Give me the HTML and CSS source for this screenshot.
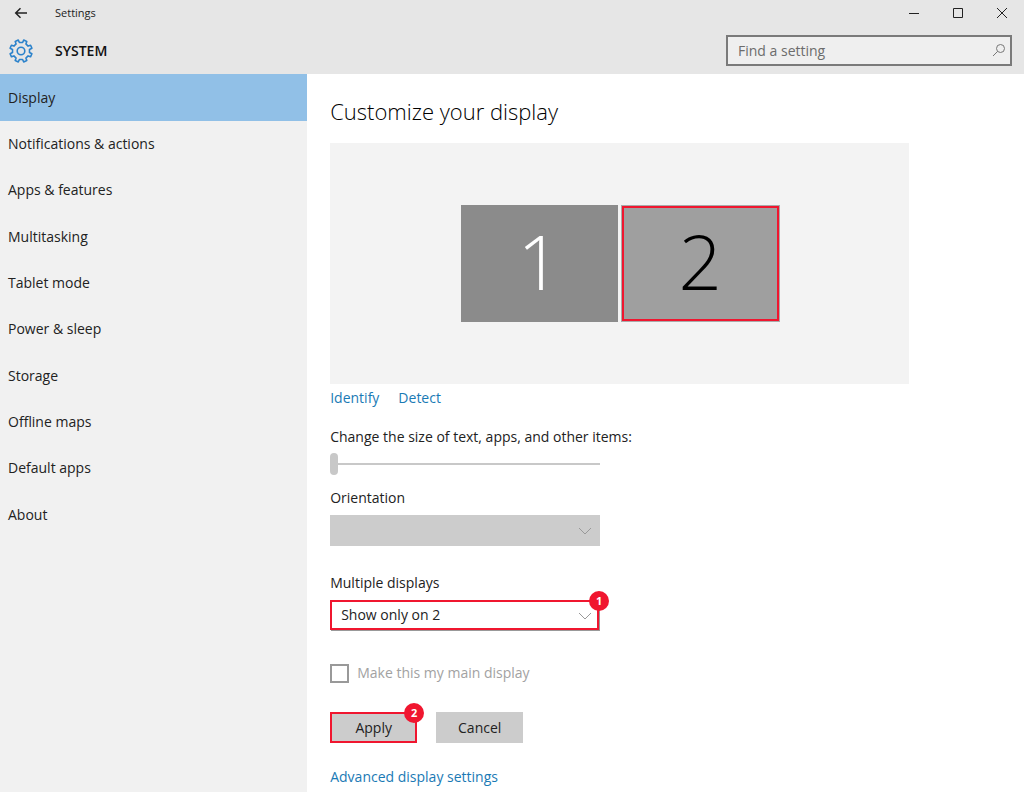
FILE: index.html
```html
<!DOCTYPE html>
<html lang="en">
<head>
    <meta charset="UTF-8">
    <meta name="viewport" content="width=device-width, initial-scale=1.0">
    <title>Settings</title>
    <link rel="stylesheet" href="styles.css">
</head>
<body>
    <header>
        <div class="titlebar">
            <button class="back" type="button" aria-label="Back">
                <svg width="14" height="12" viewBox="0 0 14 12"><path d="M13 6H2M6.500 1.200L1.700 6l4.800 4.800"/></svg>
            </button>
            <span class="app-name">Settings</span>
            <div class="window-buttons">
                <button type="button" aria-label="Minimize">
                    <svg width="12" height="12" viewBox="0 0 12 12"><path d="M1 6.500h10"/></svg>
                </button>
                <button type="button" aria-label="Maximize">
                    <svg width="12" height="12" viewBox="0 0 12 12"><path d="M1.500 1.500h9v9h-9z"/></svg>
                </button>
                <button type="button" aria-label="Close">
                    <svg width="12" height="12" viewBox="0 0 12 12"><path d="M1 1l10 10M11 1L1 11"/></svg>
                </button>
            </div>
        </div>
        <div class="page-bar">
            <svg class="gear" width="24" height="24" viewBox="0 0 24 24">
                <path d="M13.600 3.500L14.700 1.100 17.800 2.400 16.900 4.900 19.100 7.100 21.600 6.200 22.900 9.300 20.500 10.400V13.600L22.900 14.700 21.600 17.800 19.100 16.900 16.900 19.100 17.800 21.600 14.700 22.900 13.600 20.500H10.400L9.300 22.900 6.200 21.600 7.100 19.100 4.900 16.900 2.400 17.800 1.100 14.700 3.500 13.600V10.400L1.100 9.300 2.400 6.200 4.900 7.100 7.100 4.900 6.200 2.400 9.300 1.100 10.400 3.500z"/>
                <circle cx="12" cy="12" r="3.800"/>
            </svg>
            <h1>SYSTEM</h1>
            <form class="search">
                <input type="text" placeholder="Find a setting" aria-label="Find a setting">
                <svg width="14" height="14" viewBox="0 0 14 14"><circle cx="8.500" cy="5.500" r="4"/><path d="M5.600 8.400L1 13"/></svg>
            </form>
        </div>
    </header>

    <div class="content">
        <nav>
            <a class="active" href="#display">Display</a>
            <a href="#notifications">Notifications &amp; actions</a>
            <a href="#apps">Apps &amp; features</a>
            <a href="#multitasking">Multitasking</a>
            <a href="#tablet">Tablet mode</a>
            <a href="#power">Power &amp; sleep</a>
            <a href="#storage">Storage</a>
            <a href="#maps">Offline maps</a>
            <a href="#default">Default apps</a>
            <a href="#about">About</a>
        </nav>

        <main>
            <h2>Customize your display</h2>
            <div class="preview">
                <button class="screen" type="button">1</button>
                <button class="screen selected" type="button">2</button>
            </div>
            <div class="links">
                <a href="#identify">Identify</a>
                <a href="#detect">Detect</a>
            </div>

            <div class="field">
                <label for="size">Change the size of text, apps, and other items:</label>
                <input id="size" type="range" min="0" max="100" value="0" disabled>
            </div>

            <div class="field orientation">
                <label for="orientation">Orientation</label>
                <div class="dropdown">
                    <select id="orientation" disabled><option></option></select>
                    <svg class="chevron" width="14" height="8" viewBox="0 0 14 8"><path d="M1 1l6 6 6-6"/></svg>
                </div>
            </div>

            <div class="field displays">
                <label for="displays">Multiple displays</label>
                <div class="dropdown">
                    <select id="displays" class="marked"><option>Show only on 2</option></select>
                    <svg class="chevron" width="14" height="8" viewBox="0 0 14 8"><path d="M1 1l6 6 6-6"/></svg>
                    <span class="badge">1</span>
                </div>
            </div>

            <div class="check">
                <input id="main-display" type="checkbox" disabled>
                <label for="main-display">Make this my main display</label>
            </div>

            <div class="actions">
                <div class="action">
                    <button class="marked" type="button">Apply</button>
                    <span class="badge">2</span>
                </div>
                <button type="button">Cancel</button>
            </div>

            <a class="advanced" href="#advanced">Advanced display settings</a>
        </main>
    </div>
</body>
</html>
```
FILE: styles.css
```css
* {
    box-sizing: border-box;
}

body {
    margin: 0;
    min-height: 100vh;
    display: flex;
    flex-direction: column;
    font-family: "Open Sans", "Noto Sans", sans-serif;
    font-size: 14px;
    line-height: 20px;
    color: #222;
    background: #fff;
}

button, input, select {
    font: inherit;
    color: inherit;
    margin: 0;
}

button {
    border: none;
    padding: 0;
    background: none;
}

a {
    color: #1a7ab5;
    text-decoration: none;
}

svg {
    fill: none;
    stroke: #222;
}

header {
    background: #e6e6e6;
}

/* Title bar */
.titlebar {
    display: flex;
    align-items: center;
    height: 25px;
}

.back {
    width: 55px;
    height: 25px;
    padding-right: 13px;
}

.back svg, .window-buttons svg {
    display: block;
    margin: auto;
}

.back svg {
    stroke-width: 1.5;
}

.app-name {
    font-size: 11px;
}

.window-buttons {
    display: flex;
    margin-left: auto;
}

.window-buttons button {
    width: 44px;
    height: 25px;
}

/* Heading and search */
.page-bar {
    display: flex;
    align-items: center;
    height: 49px;
    padding: 2px 12px 0 9px;
}

.gear {
    stroke: #2b82cb;
    stroke-width: 1.6;
    stroke-linejoin: round;
}

h1 {
    margin: 0 0 0 22px;
    font-size: 14px;
    font-weight: 600;
    color: #111;
}

.search {
    position: relative;
    width: 286px;
    margin-left: auto;
}

.search input {
    display: block;
    width: 100%;
    height: 31px;
    padding: 0 32px 0 10px;
    border: 2px solid #7a7a7a;
    border-radius: 0;
    background: #efefef;
}

.search input::placeholder {
    color: #6c6c6c;
    opacity: 1;
}

.search svg {
    position: absolute;
    right: 6px;
    top: 8px;
    stroke: #777;
}

.content {
    display: flex;
    flex: 1;
}

/* Side menu */
nav {
    width: 30%;
    background: #f1f1f1;
}

nav a {
    display: block;
    padding: 13px 8px;
    color: #222;
}

nav a:nth-child(3n + 1) {
    padding-top: 14px;
}

nav .active {
    background: #91c0e7;
}

main {
    flex: 1;
    padding: 21px 23px 0;
}

h2 {
    margin: 0 0 16px;
    font-size: 22px;
    font-weight: 300;
    line-height: 32px;
    color: #000;
}

.preview {
    display: flex;
    justify-content: center;
    align-items: center;
    gap: 4px;
    max-width: 579px;
    height: 241px;
    background: #f3f3f3;
}

.screen {
    width: 157px;
    height: 117px;
    background: #8b8b8b;
    color: #fff;
    font-size: 76px;
    font-weight: 300;
    line-height: 76px;
    padding-bottom: 5px;
}

.screen.selected {
    height: 115px;
    border: 2px solid #f0162f;
    background: #9f9f9f;
    color: #000;
    box-shadow: 0 0 0 1px #aaa;
}

.links {
    display: flex;
    gap: 19px;
    margin: 4px 0 19px;
}

.field label {
    display: block;
}

/* Size slider */
input[type="range"] {
    appearance: none;
    display: block;
    width: 270px;
    height: 22px;
    margin-top: 6px;
    background: linear-gradient(#c8c8c8, #c8c8c8) center / 100% 2px no-repeat;
}

input[type="range"]::-webkit-slider-thumb {
    appearance: none;
    width: 8px;
    height: 22px;
    border-radius: 4px;
    background: #c8c8c8;
}

.orientation {
    margin-top: 13px;
}

.displays {
    margin-top: 27px;
}

.dropdown {
    position: relative;
    width: 270px;
    margin-top: 7px;
}

select {
    appearance: none;
    display: block;
    width: 100%;
    height: 31px;
    padding: 0 30px 0 9px;
    border: none;
    border-radius: 0;
    background: #fff;
}

select:disabled {
    background: #ccc;
    opacity: 1;
}

.marked {
    border: 2px solid #f0162f;
}

select.marked {
    width: 269px;
    height: 30px;
    box-shadow: 1px 1px 0 #999;
}

.chevron {
    position: absolute;
    right: 8px;
    top: 12px;
    stroke: #999;
    pointer-events: none;
}

.badge {
    position: absolute;
    top: -9px;
    right: -9px;
    width: 20px;
    border-radius: 50%;
    background: #f0162f;
    color: #fff;
    font-size: 11px;
    font-weight: 700;
    text-align: center;
}

.check {
    display: flex;
    align-items: center;
    gap: 8px;
    margin-top: 33px;
    color: #a2a2a2;
}

.check input {
    appearance: none;
    width: 19px;
    height: 19px;
    border: 2px solid #999;
    background: #fff;
}

.actions {
    display: flex;
    gap: 19px;
    margin: 29px 0 24px;
}

.action {
    position: relative;
}

.actions button {
    display: block;
    width: 87px;
    height: 31px;
    background: #ccc;
}

.action .badge {
    right: -7px;
}
```
